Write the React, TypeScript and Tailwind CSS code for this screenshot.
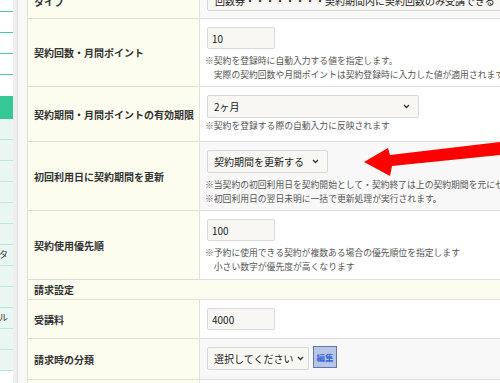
import React from "react";

const font = { fontFamily: '"Noto Sans CJK JP", "Noto Sans", sans-serif' };

function Chevron() {
  return (
    <svg width="7" height="5" viewBox="0 0 7 5" className="shrink-0">
      <path d="M1 1l2.5 2.5L6 1" fill="none" stroke="#333" strokeWidth="1.3" />
    </svg>
  );
}

function Select({ label, w, pr = "pr-[8px]" }: { label: string; w: string; pr?: string }) {
  return (
    <div className={`${w} h-[23px] flex items-center justify-between pl-[6px] ${pr} bg-[#f8f7f4] border border-[#d6d6d6] rounded-[2px] text-[10px] text-[#222]`}>
      <span className="whitespace-nowrap">{label}</span>
      <Chevron />
    </div>
  );
}

function Input({ value }: { value: string }) {
  return (
    <div className="w-[68px] h-[22px] flex items-center px-[4px] bg-[#f8f7f4] border border-[#d8d8d8] rounded-[2px] text-[10px] text-[#222]">
      {value}
    </div>
  );
}

function Note({ children }: { children: React.ReactNode }) {
  return <div className="text-[8.8px] leading-[14px] text-[#555] whitespace-nowrap">{children}</div>;
}

function Row({
  label,
  h,
  gray,
  children,
}: {
  label: string;
  h: string;
  gray?: boolean;
  children: React.ReactNode;
}) {
  return (
    <div className={`grid grid-cols-[172px_1fr] shrink-0 ${h} border-b border-[#dedede]`}>
      <div className="bg-[#fdfdef] border-r border-[#e2e2e2] flex items-center pl-[6px] text-[10px] font-bold text-[#333] whitespace-nowrap">
        {label}
      </div>
      <div className={`${gray ? "bg-[#f8f8f8]" : "bg-white"} pl-[7px] pt-[8px] overflow-hidden`}>{children}</div>
    </div>
  );
}

function Sidebar() {
  const top = [1, 2, 3];
  const bottom = ["", "", "", "", "", "", "タ", "", "", "ル", "", ""];
  return (
    <div className="w-[13px] shrink-0 flex flex-col bg-white">
      <div className="h-[12px] shrink-0 border-b border-[#4cc9a4]" />
      {top.map((i) => (
        <div key={i} className="h-[21px] shrink-0 border-b border-[#4cc9a4]" />
      ))}
      <div className="h-[21px] shrink-0" />
      <div className="h-[23px] shrink-0 bg-[#33c896]" />
      {bottom.map((t, i) => (
        <div
          key={i}
          className="h-[21px] shrink-0 bg-[#eaf6f2] border-b border-[#bfe6d8] text-[9px] text-[#333] flex items-center -ml-[1px] overflow-hidden whitespace-nowrap"
        >
          {t}
        </div>
      ))}
    </div>
  );
}

export default function App() {
  return (
    <div className="w-[500px] h-[383px] overflow-hidden flex relative bg-white" style={font}>
      <Sidebar />
      <div className="w-[5px] shrink-0 bg-[#eeeeee] border-r border-[#dddddd]" />
      <div className="w-[10px] shrink-0 bg-[#f7f7f7] border-r border-[#dddddd]" />

      <div className="flex-1 flex flex-col -mt-[16px]">
        {/* タイプ */}
        <div className="grid grid-cols-[172px_1fr] shrink-0 h-[35px] border-b border-[#dedede]">
          <div className="bg-[#fdfdef] border-r border-[#e2e2e2] flex items-center pl-[6px] text-[10px] font-bold text-[#333]">
            タイプ
          </div>
          <div className="bg-[#f9f9f9] pl-[7px] pt-[5px] overflow-hidden">
            <div className="w-[330px] h-[22px] flex items-center pl-[7px] bg-[#f8f7f4] border border-[#d6d6d6] rounded-[2px] text-[10px] text-[#222] whitespace-nowrap">
              回数券・・・・・・・・契約期間内に契約回数のみ受講できる
            </div>
          </div>
        </div>

        <Row label="契約回数・月間ポイント" h="h-[68px]">
          <Input value="10" />
          <div className="mt-[5px] -ml-[2px]">
            <Note>※契約を登録時に自動入力する値を指定します。</Note>
            <Note>　実際の契約回数や月間ポイントは契約登録時に入力した値が適用されます。</Note>
          </div>
        </Row>

        <Row label="契約期間・月間ポイントの有効期限" h="h-[55px]">
          <Select label="2ヶ月" w="w-[212px]" />
          <div className="mt-[1px] -ml-[2px]">
            <Note>※契約を登録する際の自動入力に反映されます</Note>
          </div>
        </Row>

        <Row label="初回利用日に契約期間を更新" h="h-[69px]" gray>
          <Select label="契約期間を更新する" w="w-[121px]" />
          <div className="mt-[5px] -ml-[2px]">
            <Note>※当契約の初回利用日を契約開始として・契約終了は上の契約期間を元にセットします</Note>
            <Note>※初回利用日の翌日未明に一括で更新処理が実行されます。</Note>
          </div>
        </Row>

        <Row label="契約使用優先順" h="h-[69px]">
          <Input value="100" />
          <div className="mt-[5px] -ml-[2px]">
            <Note>※予約に使用できる契約が複数ある場合の優先順位を指定します</Note>
            <Note>　小さい数字が優先度が高くなります</Note>
          </div>
        </Row>

        <div className="h-[20px] shrink-0 bg-[#fdfdef] border-b border-[#dedede] flex items-center pl-[6px] text-[10px] font-bold text-[#333]">
          請求設定
        </div>

        <Row label="受講料" h="h-[39px]">
          <Input value="4000" />
        </Row>

        <Row label="請求時の分類" h="h-[41px]" gray>
          <div className="flex items-start gap-[4px]">
            <Select label="選択してください" w="w-[102px]" pr="pr-[4px]" />
            <div className="-mt-[1px] w-[24px] h-[22px] flex items-center justify-center bg-[#b9c5e4] border border-[#6077b0] text-[8.5px] font-bold text-[#3a6ad8]">
              編集
            </div>
          </div>
        </Row>

        <div className="grid grid-cols-[172px_1fr] shrink-0 h-[20px]">
          <div className="bg-[#fdfdef] border-r border-[#e2e2e2]" />
          <div className="bg-white" />
        </div>
      </div>

      {/* red arrow */}
      <svg className="absolute left-0 top-0 pointer-events-none" width="500" height="383" viewBox="0 0 500 383">
        <polygon points="364,162 388,148 390,155 500,142 500,155 392,166 390,176" fill="#ff0000" />
      </svg>
    </div>
  );
}
